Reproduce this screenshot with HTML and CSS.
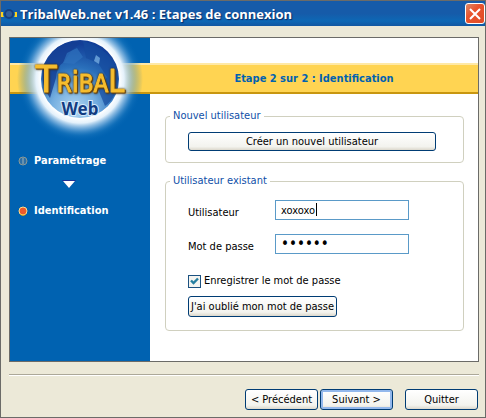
FILE: index.html
```html
<!DOCTYPE html>
<html lang="fr">
<head>
    <meta charset="UTF-8">
    <meta name="viewport" content="width=device-width, initial-scale=1.0">
    <title>TribalWeb.net v1.46 : Etapes de connexion</title>
    <link rel="stylesheet" href="styles.css">
</head>
<body>
    <form class="window">
        <!-- Title bar -->
        <header class="title-bar">
            <svg class="app-icon" width="16" height="16" viewBox="0 0 16 16" aria-hidden="true">
                <rect x="0" y="6" width="16" height="5" fill="#ffd21f"/>
                <circle cx="8" cy="8" r="6" fill="#0b62b4"/>
                <circle cx="8" cy="8" r="5" fill="#173f80"/>
                <circle cx="8" cy="8" r="3" fill="#335f9c"/>
            </svg>
            <h1>TribalWeb.net v1.46 : Etapes de connexion</h1>
            <button type="button" class="close" aria-label="Fermer">
                <svg width="12" height="12" viewBox="0 0 12 12">
                    <path d="M1 1 L11 11 M11 1 L1 11" stroke="#fff" stroke-width="2" fill="none"/>
                </svg>
            </button>
        </header>

        <main class="panel">
            <!-- Steps -->
            <nav class="sidebar">
                <div class="step">
                    <svg width="10" height="10" viewBox="0 0 10 10" aria-hidden="true">
                        <circle cx="5" cy="5" r="4" fill="#2f6fa5" stroke="#8b9a96"/>
                        <path d="M5 2 V8" stroke="#9fb4b8"/>
                    </svg>
                    <span>Paramétrage</span>
                </div>
                <svg class="arrow" width="14" height="8" viewBox="0 0 14 8" aria-hidden="true">
                    <path d="M0 0 H14 L7 8 Z" fill="#1b2f96"/>
                    <path d="M1 1 H13 L7 8 Z" fill="#fff"/>
                </svg>
                <div class="step">
                    <svg width="10" height="10" viewBox="0 0 10 10" aria-hidden="true">
                        <circle cx="5" cy="5" r="4" fill="#ee5a2c" stroke="#ffe08a"/>
                        <path d="M2 8 A4 4 0 0 0 8 8" stroke="#e0a010" fill="none"/>
                    </svg>
                    <span>Identification</span>
                </div>
            </nav>

            <div class="banner">
                <h2>Etape 2 sur 2 : Identification</h2>
            </div>

            <!-- Logo -->
            <svg class="logo" width="140" height="106" viewBox="0 0 140 106" role="img" aria-label="Tribal Web">
                <defs>
                    <radialGradient id="glow" gradientUnits="userSpaceOnUse" cx="70" cy="41" r="63">
                        <stop offset="0.62" stop-color="#fff"/>
                        <stop offset="0.7" stop-color="#e4f1fb"/>
                        <stop offset="0.8" stop-color="#8abbe4" stop-opacity="0.7"/>
                        <stop offset="0.9" stop-color="#2f86c8" stop-opacity="0.3"/>
                        <stop offset="1" stop-color="#0062b1" stop-opacity="0"/>
                    </radialGradient>
                    <radialGradient id="globe" gradientUnits="userSpaceOnUse" cx="64" cy="72" r="66">
                        <stop offset="0" stop-color="#b4d8f2"/>
                        <stop offset="0.35" stop-color="#74aee0"/>
                        <stop offset="0.65" stop-color="#2a70bb"/>
                        <stop offset="1" stop-color="#123f98"/>
                    </radialGradient>
                </defs>
                <circle cx="70" cy="41" r="63" fill="url(#glow)"/>
                <circle cx="70" cy="41" r="39" fill="url(#globe)"/>
                <path d="M35 25 Q46 2 73 3 L62 12 L54 24 Q47 28 46 40 L40 60 Q28 42 35 25 Z" fill="#153f94" opacity="0.8"/>
                <path d="M73 3 Q105 12 108 40 Q107 60 95 68 L88 51 L97 39 L88 25 L76 20 Z" fill="#164b9e" opacity="0.7"/>
                <path d="M57 15 L67 10 L73 19 L64 26 L53 25 Z" fill="#2f72bd" opacity="0.7"/>
                <path d="M86 17 L90 20 L89 26 L84 23 Z" fill="#80b8e8" opacity="0.7"/>
                <text class="logo-tribal" x="70" y="54" text-anchor="middle"><tspan class="first">T</tspan>R<tspan class="mid">i</tspan>BA<tspan class="last">L</tspan></text>
                <text class="logo-web" x="70" y="77" text-anchor="middle">Web</text>
            </svg>

            <section class="content">
                <fieldset>
                    <legend>Nouvel utilisateur</legend>
                    <button type="button" class="btn btn-create">Créer un nouvel utilisateur</button>
                </fieldset>

                <fieldset class="existing">
                    <legend>Utilisateur existant</legend>
                    <div class="form-group">
                        <label for="username">Utilisateur</label>
                        <input type="text" id="username" value="xoxoxo">
                    </div>
                    <div class="form-group">
                        <label for="password">Mot de passe</label>
                        <input type="password" id="password" value="xoxoxo">
                    </div>
                    <div class="remember">
                        <input type="checkbox" id="remember" checked>
                        <label for="remember">Enregistrer le mot de passe</label>
                    </div>
                    <button type="button" class="btn btn-forgot">J'ai oublié mon mot de passe</button>
                </fieldset>
            </section>
        </main>

        <!-- Wizard buttons -->
        <footer class="actions">
            <button type="button" class="btn">&lt; Précédent</button>
            <button type="submit" class="btn btn-default">Suivant &gt;</button>
            <button type="button" class="btn btn-quit">Quitter</button>
        </footer>
    </form>
</body>
</html>
```

FILE: styles.css
```css
/* Base styles */
* {
    box-sizing: border-box;
}

body {
    margin: 0;
    font-family: "DejaVu Sans Condensed", "DejaVu Sans", Tahoma, sans-serif;
    font-size: 11px;
    line-height: 14px;
    color: #000;
    background-color: #ece9d8;
}

h1, h2 {
    margin: 0;
}

button, input {
    font: inherit;
    color: inherit;
}

.window {
    display: flex;
    flex-direction: column;
    min-height: 100vh;
    border: 1px solid #6b6b68;
    background-color: #ece9d8;
}

/* Title bar */
.title-bar {
    display: flex;
    align-items: center;
    gap: 3px;
    height: 25px;
    background: linear-gradient(#165ba9 50%, #0d68b5 80%, #1257a2);
}

.title-bar h1 {
    flex: 1;
    font-family: "Open Sans", "Trebuchet MS", sans-serif;
    font-size: 13px;
    line-height: 18px;
    color: #fff;
    text-shadow: 1px 1px 1px #0a2a66;
    white-space: nowrap;
}

.close {
    display: flex;
    align-items: center;
    justify-content: center;
    width: 20px;
    height: 21px;
    padding: 0;
    border: 1px solid #fff;
    border-radius: 3px;
    background: linear-gradient(135deg, #d98a6a, #e9542d 40%, #e04c26);
}

/* Main panel */
.panel {
    display: grid;
    grid-template-columns: 140px 1fr;
    grid-template-rows: 25px 31px 1fr;
    flex: 1;
    margin: 11px 6px 12px 8px;
    border: 1px solid #6b6b68;
    background-color: #fff;
}

.sidebar {
    grid-column: 1;
    grid-row: 1 / 4;
    display: flex;
    flex-direction: column;
    gap: 12px;
    padding: 116px 0 0 8px;
    font-weight: bold;
    color: #fff;
    background-color: #0062b1;
}

.step {
    display: flex;
    align-items: center;
    gap: 6px;
}

.arrow {
    margin: 0 0 4px 44px;
}

.banner {
    grid-column: 1 / 3;
    grid-row: 2;
    display: flex;
    align-items: center;
    padding-left: 140px;
    border-top: 2px solid #ffe9a6;
    border-bottom: 2px solid #c8960f;
    background-color: #ffd452;
}

.banner h2 {
    flex: 1;
    font-size: 11px;
    line-height: 14px;
    text-align: center;
    color: #0062b1;
}

.logo {
    grid-column: 1;
    grid-row: 1 / 4;
}

.logo-tribal {
    font-size: 24px;
    fill: #f6bd2e;
    stroke: #f6bd2e;
    stroke-width: 1px;
    stroke-linejoin: round;
    filter: drop-shadow(1px 1px 0 #6b4208) drop-shadow(0 0 1px #3d2a0a);
}

.logo-tribal .first {
    font-size: 38px;
}

.logo-tribal .mid {
    font-size: 28px;
}

.logo-tribal .last {
    font-size: 32px;
}

.logo-web {
    font-family: "Noto Sans", sans-serif;
    font-size: 17px;
    font-weight: bold;
    fill: #123c82;
    stroke: #d5eafa;
    stroke-width: 2px;
    paint-order: stroke;
}

/* Form styles */
.content {
    grid-column: 2;
    grid-row: 3;
    padding: 15px 14px 0 15px;
}

fieldset {
    min-width: 0;
    margin: 0 0 11px;
    padding: 9px 27px 11px 22px;
    border: 1px solid #d0d0bf;
    border-radius: 4px;
}

legend {
    margin-left: -18px;
    padding: 0 3px;
    color: #0f4fa8;
}

.existing {
    padding-top: 12px;
    padding-bottom: 13px;
}

.form-group {
    display: grid;
    grid-template-columns: 87px 134px;
    align-items: center;
    margin-bottom: 14px;
}

.form-group label {
    padding-top: 6px;
}

.form-group input {
    width: 100%;
    height: 20px;
    padding: 0 5px;
    border: 1px solid #5a9ac8;
    border-radius: 0;
    outline: none;
    background-color: #fff;
}

/* Caret shown until the field takes focus */
#username:not(:focus) {
    background: linear-gradient(#000, #000) 40px 2px / 1px 13px no-repeat #fff;
}

#password {
    font-size: 15px;
}

.remember {
    display: flex;
    align-items: center;
    gap: 3px;
    margin: 20px 0 8px;
}

.remember input {
    appearance: none;
    width: 13px;
    height: 13px;
    margin: 0;
    border: 1px solid #1c5180;
    background: #f4f4f0;
}

.remember input:checked {
    background: #f4f4f0 url("data:image/svg+xml,%3Csvg xmlns='http://www.w3.org/2000/svg' viewBox='0 0 11 11'%3E%3Cpath d='M2 4.5 L4.5 7 L9 2.5' stroke='%23267fa0' stroke-width='2.4' fill='none'/%3E%3C/svg%3E");
}

.btn {
    width: 73px;
    height: 21px;
    padding: 0;
    border: 1px solid #003c74;
    border-radius: 3px;
    background: linear-gradient(#fff, #f3f3ee 80%, #dcd8cc);
    white-space: nowrap;
}

.btn-create {
    display: block;
    width: 100%;
    height: 19px;
}

.btn-forgot {
    display: block;
    width: 149px;
}

.btn-default {
    box-shadow: inset 0 0 0 2px #93b8ec;
}

/* Bottom buttons */
.actions {
    display: flex;
    justify-content: flex-end;
    gap: 2px;
    margin: 0 6px 0 8px;
    padding: 14px 1px 7px 0;
    border-top: 1px solid #aca899;
    box-shadow: inset 0 1px 0 #fff;
}

.btn-quit {
    margin-left: 10px;
}
```
